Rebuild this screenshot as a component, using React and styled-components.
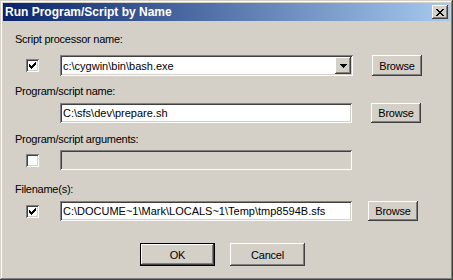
import React from "react";
import styled, { createGlobalStyle } from "styled-components";

const GlobalStyle = createGlobalStyle`
  html, body { margin: 0; padding: 0; background: #d4d0c8; }
  body { font-family: "Liberation Sans", Arial, sans-serif; }
`;

const raised = `
  box-shadow: inset -1px -1px #404040, inset 1px 1px #ffffff,
    inset -2px -2px #808080, inset 2px 2px #d4d0c8;
`;
const sunken = `
  box-shadow: inset 1px 1px #808080, inset -1px -1px #ffffff,
    inset 2px 2px #404040, inset -2px -2px #d4d0c8;
`;

const Window = styled.div`
  width: 453px;
  height: 280px;
  box-sizing: border-box;
  background: #d4d0c8;
  padding: 3px;
  display: flex;
  flex-direction: column;
  box-shadow: inset -1px -1px #404040, inset 1px 1px #d4d0c8,
    inset -2px -2px #808080, inset 2px 2px #ffffff;
`;

const TitleBar = styled.div`
  height: 18px;
  flex: none;
  display: flex;
  align-items: center;
  justify-content: space-between;
  padding: 0 2px 0 2px;
  background: linear-gradient(to right, #0a246a, #a6caf0);
`;

const Title = styled.span`
  color: #fff;
  font: bold 12px "Liberation Sans", Arial, sans-serif;
  line-height: 18px;
  white-space: nowrap;
`;

const CloseBtn = styled.div`
  width: 16px;
  height: 14px;
  background: #d4d0c8;
  display: flex;
  align-items: center;
  justify-content: center;
  ${raised}
`;

const Body = styled.div`
  padding-left: 12px;
  display: flex;
  flex-direction: column;
`;

const Label = styled.div`
  font-size: 11px;
  line-height: 13px;
  height: 13px;
  letter-spacing: -0.25px;
  color: #000;
  margin-top: ${(p) => p.$mt}px;
  white-space: nowrap;
`;

const Row = styled.div`
  display: flex;
  align-items: center;
  padding-left: 11px;
  height: ${(p) => p.$h}px;
  margin-top: ${(p) => p.$mt}px;
`;

const CheckSlot = styled.div`
  width: 13px;
  height: 13px;
  flex: none;
  margin-right: 21px;
  box-sizing: border-box;
  display: flex;
  align-items: center;
  justify-content: center;
  background: ${(p) => (p.$empty ? "transparent" : "#fff")};
  ${(p) => (p.$empty ? "" : sunken)}
`;

const Field = styled.div`
  width: ${(p) => p.$w}px;
  height: 100%;
  box-sizing: border-box;
  flex: none;
  display: flex;
  align-items: center;
  padding: 0 2px 0 3px;
  background: ${(p) => (p.$disabled ? "#d4d0c8" : "#fff")};
  font-size: 11px;
  color: #000;
  white-space: nowrap;
  overflow: hidden;
  ${sunken}
`;

const FieldText = styled.span`
  flex: 1;
  overflow: hidden;
`;

const DropBtn = styled.div`
  width: 16px;
  height: 17px;
  flex: none;
  margin-right: 0;
  background: #d4d0c8;
  display: flex;
  align-items: center;
  justify-content: center;
  ${raised}
`;

const Button = styled.div`
  width: ${(p) => p.$w}px;
  height: ${(p) => p.$h}px;
  flex: none;
  box-sizing: border-box;
  margin-left: ${(p) => p.$ml || 0}px;
  background: #d4d0c8;
  display: flex;
  align-items: center;
  justify-content: center;
  font-size: 11px;
  letter-spacing: -0.2px;
  color: #000;
  ${(p) => (p.$default ? "border: 1px solid #000;" : "")}
  ${raised}
`;

const ButtonRow = styled.div`
  display: flex;
  justify-content: center;
  gap: 15px;
  margin-top: 22px;
  padding-right: 8px;
`;

const CheckMark = () => (
  <svg width="7" height="7" viewBox="0 0 7 7" shapeRendering="crispEdges">
    {[2, 3, 4, 3, 2, 1, 0].map((y, x) => (
      <rect key={x} x={x} y={y} width="1" height="3" fill="#000" />
    ))}
  </svg>
);

const CloseX = () => (
  <svg width="8" height="7" viewBox="0 0 8 7" shapeRendering="crispEdges">
    {[
      [0, 6],
      [1, 5],
      [2, 4],
      [3, 3],
      [2, 4],
      [1, 5],
      [0, 6],
    ].map(([a, b], y) => (
      <g key={y}>
        <rect x={a} y={y} width="2" height="1" fill="#000" />
        <rect x={b} y={y} width="2" height="1" fill="#000" />
      </g>
    ))}
  </svg>
);

const DownArrow = () => (
  <svg width="7" height="4" viewBox="0 0 7 4" shapeRendering="crispEdges">
    {[0, 1, 2, 3].map((i) => (
      <rect key={i} x={i} y={i} width={7 - 2 * i} height="1" fill="#000" />
    ))}
  </svg>
);

export default function App() {
  return (
    <>
      <GlobalStyle />
      <Window>
        <TitleBar>
          <Title>Run Program/Script by Name</Title>
          <CloseBtn>
            <CloseX />
          </CloseBtn>
        </TitleBar>
        <Body>
          <Label $mt={12}>Script processor name:</Label>
          <Row $h={21} $mt={9}>
            <CheckSlot>
              <CheckMark />
            </CheckSlot>
            <Field $w={293} style={{ paddingRight: 2 }}>
              <FieldText>c:\cygwin\bin\bash.exe</FieldText>
              <DropBtn>
                <DownArrow />
              </DropBtn>
            </Field>
            <Button $w={50} $h={21} $ml={19}>Browse</Button>
          </Row>

          <Label $mt={9}>Program/script name:</Label>
          <Row $h={20} $mt={5}>
            <CheckSlot $empty />
            <Field $w={292}>
              <FieldText>C:\sfs\dev\prepare.sh</FieldText>
            </Field>
            <Button $w={50} $h={20} $ml={19}>Browse</Button>
          </Row>

          <Label $mt={10}>Program/script arguments:</Label>
          <Row $h={20} $mt={4}>
            <CheckSlot />
            <Field $w={292} $disabled />
          </Row>

          <Label $mt={13}>Filename(s):</Label>
          <Row $h={20} $mt={5}>
            <CheckSlot>
              <CheckMark />
            </CheckSlot>
            <Field $w={292}>
              <FieldText>C:\DOCUME~1\Mark\LOCALS~1\Temp\tmp8594B.sfs</FieldText>
            </Field>
            <Button $w={50} $h={20} $ml={16}>Browse</Button>
          </Row>
        </Body>
        <ButtonRow>
          <Button $w={75} $h={23} $default>OK</Button>
          <Button $w={75} $h={23}>Cancel</Button>
        </ButtonRow>
      </Window>
    </>
  );
}
